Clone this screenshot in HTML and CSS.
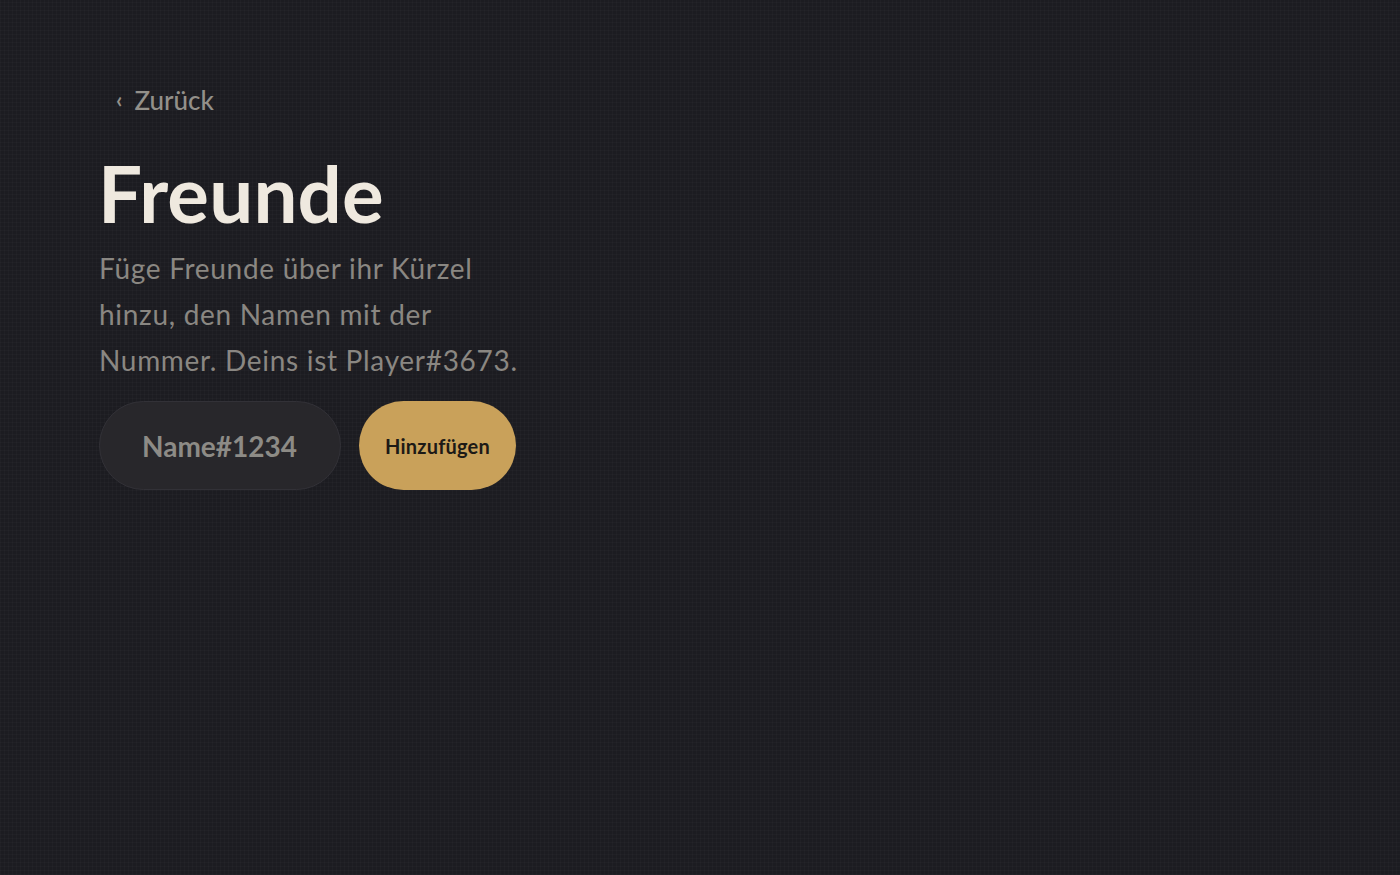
FILE: index.html
```html
<!DOCTYPE html>
<html lang="de">
<head>
<meta charset="utf-8">
<title>Freunde</title>
<link rel="stylesheet" href="styles.css">
</head>
<body>
<main class="page">
  <a class="back" href="#"><span class="chev">‹</span><span>Zurück</span></a>
  <h1 class="title">Freunde</h1>
  <p class="lead">Füge Freunde über ihr Kürzel hinzu, den Namen mit der Nummer. Deins ist Player#3673.</p>
  <form class="add">
    <input class="field" type="text" placeholder="Name#1234">
    <button class="btn" type="button">Hinzufügen</button>
  </form>
</main>
</body>
</html>
```
FILE: styles.css
```css
html, body {
  margin: 0;
  height: 100%;
}
body {
  background-color: #1c1c21;
  background-image:
    repeating-linear-gradient(0deg, rgba(255,255,255,0.018) 0 1px, transparent 1px 4px),
    repeating-linear-gradient(90deg, rgba(255,255,255,0.018) 0 1px, transparent 1px 4px);
  font-family: Lato, "Open Sans", sans-serif;
  color: #efe9df;
}
.page {
  padding: 84px 0 0 99px;
  display: flex;
  flex-direction: column;
  align-items: flex-start;
}
.back {
  display: flex;
  align-items: center;
  gap: 12px;
  margin-left: 17px;
  color: #93908a;
  text-decoration: none;
  font-size: 26px;
  font-weight: 500;
  line-height: 32px;
}
.chev {
  font-size: 22px;
  font-weight: 700;
}
.title {
  margin: 37px 0 0 -1px;
  font-size: 78px;
  line-height: 80px;
  font-weight: 700;
  letter-spacing: 0.2px;
  color: #efe9df;
}
.lead {
  margin: 12px 0 0;
  width: 430px;
  font-size: 28px;
  line-height: 46px;
  letter-spacing: 0.7px;
  color: #8a8782;
}
.add {
  margin-top: 18px;
  display: flex;
  gap: 18px;
}
.field {
  box-sizing: border-box;
  width: 242px;
  height: 89px;
  border-radius: 45px;
  border: 1px solid #323137;
  background: #28272b;
  padding: 0 20px 0 42px;
  font-family: inherit;
  font-size: 28px;
  font-weight: 700;
  color: #efe9df;
  outline: none;
}
.field::placeholder {
  color: #8d8b86;
}
.btn {
  box-sizing: border-box;
  width: 157px;
  height: 89px;
  border-radius: 45px;
  border: none;
  background: #c9a15a;
  color: #1d1a16;
  font-family: inherit;
  font-size: 20px;
  font-weight: 700;
  letter-spacing: 0.2px;
  cursor: pointer;
}
```
